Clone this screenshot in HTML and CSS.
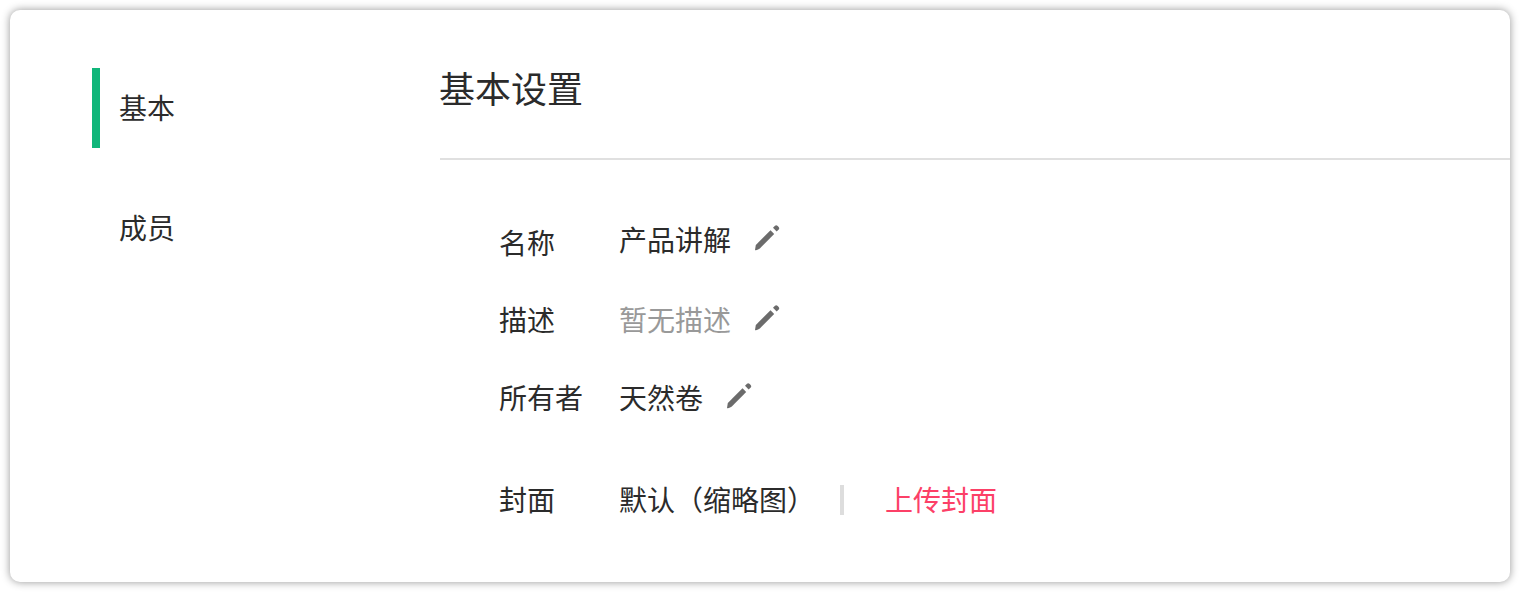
FILE: index.html
```html
<!DOCTYPE html>
<html lang="zh-CN">

<head>
    <meta charset="UTF-8">
    <title>基本设置</title>
    <link rel="stylesheet" href="styles.css">
</head>

<body>
    <div class="panel">
        <div class="side_menu">
            <div class="menu_item active">基本</div>
            <div class="menu_item">成员</div>
        </div>
        <div class="content">
            <h2 class="title">基本设置</h2>
            <div class="rows">
                <div class="row row_name">
                    <span class="label">名称</span>
                    <span class="value">产品讲解</span>
                    <svg class="edit" viewBox="0 0 28 28"><path d="M2 26 2.8 21 17.5 6.3 21.2 10 6.8 24.6C5.8 25.6 3 26.6 2 26z"/><path d="M20 3.8 22 1.8a1.7 1.7 0 0 1 2.4 0l1.3 1.3a1.7 1.7 0 0 1 0 2.4L23.7 7.5z"/></svg>
                </div>
                <div class="row">
                    <span class="label">描述</span>
                    <span class="value muted">暂无描述</span>
                    <svg class="edit" viewBox="0 0 28 28"><path d="M2 26 2.8 21 17.5 6.3 21.2 10 6.8 24.6C5.8 25.6 3 26.6 2 26z"/><path d="M20 3.8 22 1.8a1.7 1.7 0 0 1 2.4 0l1.3 1.3a1.7 1.7 0 0 1 0 2.4L23.7 7.5z"/></svg>
                </div>
                <div class="row">
                    <span class="label">所有者</span>
                    <span class="value">天然卷</span>
                    <svg class="edit" viewBox="0 0 28 28"><path d="M2 26 2.8 21 17.5 6.3 21.2 10 6.8 24.6C5.8 25.6 3 26.6 2 26z"/><path d="M20 3.8 22 1.8a1.7 1.7 0 0 1 2.4 0l1.3 1.3a1.7 1.7 0 0 1 0 2.4L23.7 7.5z"/></svg>
                </div>
                <div class="row row_cover">
                    <span class="label">封面</span>
                    <span class="value">默认（缩略图）</span>
                    <span class="divider"></span>
                    <a class="upload">上传封面</a>
                </div>
            </div>
        </div>
    </div>
</body>

</html>
```

FILE: styles.css
```css
html, body {
    margin: 0;
    padding: 0;
}

body {
    width: 1520px;
    height: 592px;
    overflow: hidden;
    background-color: #fff;
    font-family: "Noto Sans CJK SC", "Liberation Sans", sans-serif;
    color: #2b2b2b;
    padding: 10px;
    box-sizing: border-box;
}

.panel {
    display: flex;
    height: 572px;
    background-color: #fff;
    border-radius: 10px;
    box-shadow: 0 0 9px rgba(0, 0, 0, 0.42);
    overflow: hidden;
}

.side_menu {
    width: 430px;
    flex: none;
    padding: 58px 0 0 82px;
    box-sizing: border-box;
}

.menu_item {
    height: 80px;
    line-height: 78px;
    padding-left: 19px;
    margin-bottom: 40px;
    font-size: 28px;
    border-left: 8px solid transparent;
}

.menu_item.active {
    border-left-color: #10b67a;
}

.content {
    flex: 1;
}

.title {
    margin: 0;
    height: 150px;
    padding-top: 52px;
    box-sizing: border-box;
    font-size: 36px;
    line-height: 50px;
    font-weight: 400;
    text-indent: -1px;
    border-bottom: 2px solid #e0e0e0;
}

.rows {
    padding: 43px 0 0 59px;
}

.row {
    display: flex;
    align-items: center;
    height: 77.5px;
    font-size: 28px;
}

.row_name .value {
    margin-top: -6px;
}

.row_cover {
    margin-top: 25px;
}

.label {
    width: 120px;
}

.muted {
    color: #999;
}

.edit {
    width: 28px;
    height: 28px;
    margin: -2px 0 0 22px;
    fill: #6b6b6b;
}

.row_name .edit {
    margin-top: -8px;
}

.divider {
    width: 4px;
    height: 30px;
    margin: 2px 41px 0 25px;
    background-color: #ddd;
}

.upload {
    color: #fc4067;
}
```
